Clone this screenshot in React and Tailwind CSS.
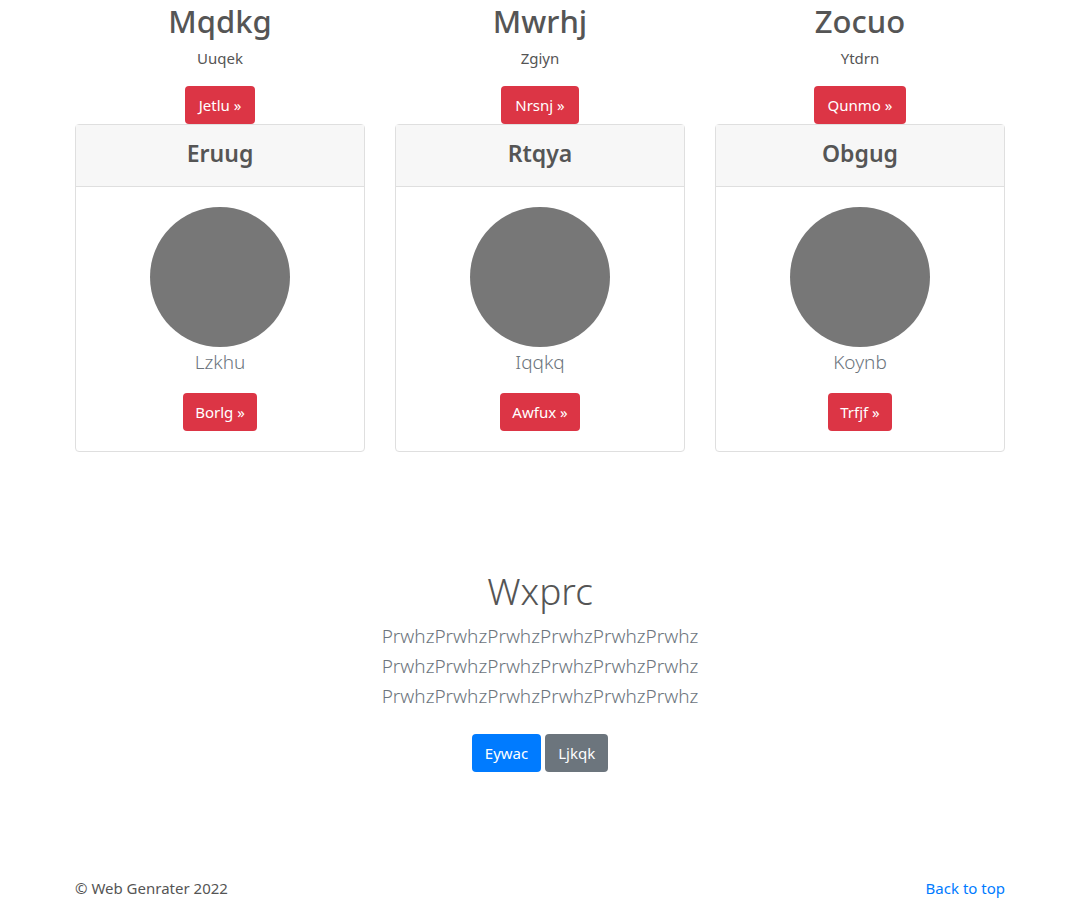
export default function App() {
  const cols = [
    { title: "Mqdkg", sub: "Uuqek", btn: "Jetlu", card: "Eruug", name: "Lzkhu", cbtn: "Borlg" },
    { title: "Mwrhj", sub: "Zgiyn", btn: "Nrsnj", card: "Rtqya", name: "Iqqkq", cbtn: "Awfux" },
    { title: "Zocuo", sub: "Ytdrn", btn: "Qunmo", card: "Obgug", name: "Koynb", cbtn: "Trfjf" },
  ];

  return (
    <div className="min-h-[900px] bg-white text-[#555] font-['Noto_Sans',sans-serif]">
      <div className="w-[930px] mx-auto">
        <div className="grid grid-cols-3 gap-[30px]">
          {cols.map((c) => (
            <div key={c.title} className="flex flex-col items-center">
              <h2 className="text-[31px] font-medium leading-[38px] pt-[2px] mb-[6px]">{c.title}</h2>
              <p className="text-[15px] leading-6 mb-4">{c.sub}</p>
              <button className="h-[38px] px-[14px] rounded bg-[#dc3545] text-white text-[15px]">
                {c.btn} &raquo;
              </button>
              <div className="w-full border border-[#dfdfdf] rounded">
                <div className="bg-[#f7f7f7] border-b border-[#dfdfdf] h-[62px] flex items-center justify-center pb-1">
                  <h3 className="text-[23px] font-semibold">{c.card}</h3>
                </div>
                <div className="p-5 flex flex-col items-center">
                  <div className="w-[140px] h-[140px] rounded-full bg-[#777]"></div>
                  <p className="text-[19px] font-light leading-[30px] text-[#6c757d] mb-4">{c.name}</p>
                  <button className="h-[38px] px-3 rounded bg-[#dc3545] text-white text-[15px]">
                    {c.cbtn} &raquo;
                  </button>
                </div>
              </div>
            </div>
          ))}
        </div>

        <div className="mt-[115px] flex flex-col items-center">
          <h1 className="text-[37px] font-light leading-[48px] mb-[6px] text-[#555]">Wxprc</h1>
          <div className="text-[19px] font-light leading-[30px] text-[#6c757d] text-center mb-[23px]">
            <p>PrwhzPrwhzPrwhzPrwhzPrwhzPrwhz</p>
            <p>PrwhzPrwhzPrwhzPrwhzPrwhzPrwhz</p>
            <p>PrwhzPrwhzPrwhzPrwhzPrwhzPrwhz</p>
          </div>
          <div className="flex gap-1">
            <button className="h-[38px] px-[13px] rounded bg-[#007bff] text-white text-[15px]">Eywac</button>
            <button className="h-[38px] px-[13px] rounded bg-[#6c757d] text-white text-[15px]">Ljkqk</button>
          </div>
        </div>

        <footer className="mt-[104px] flex justify-between items-center text-[15px] leading-6">
          <p>&copy; Web Genrater 2022</p>
          <a href="#" className="text-[#007bff]">Back to top</a>
        </footer>
      </div>
    </div>
  );
}
